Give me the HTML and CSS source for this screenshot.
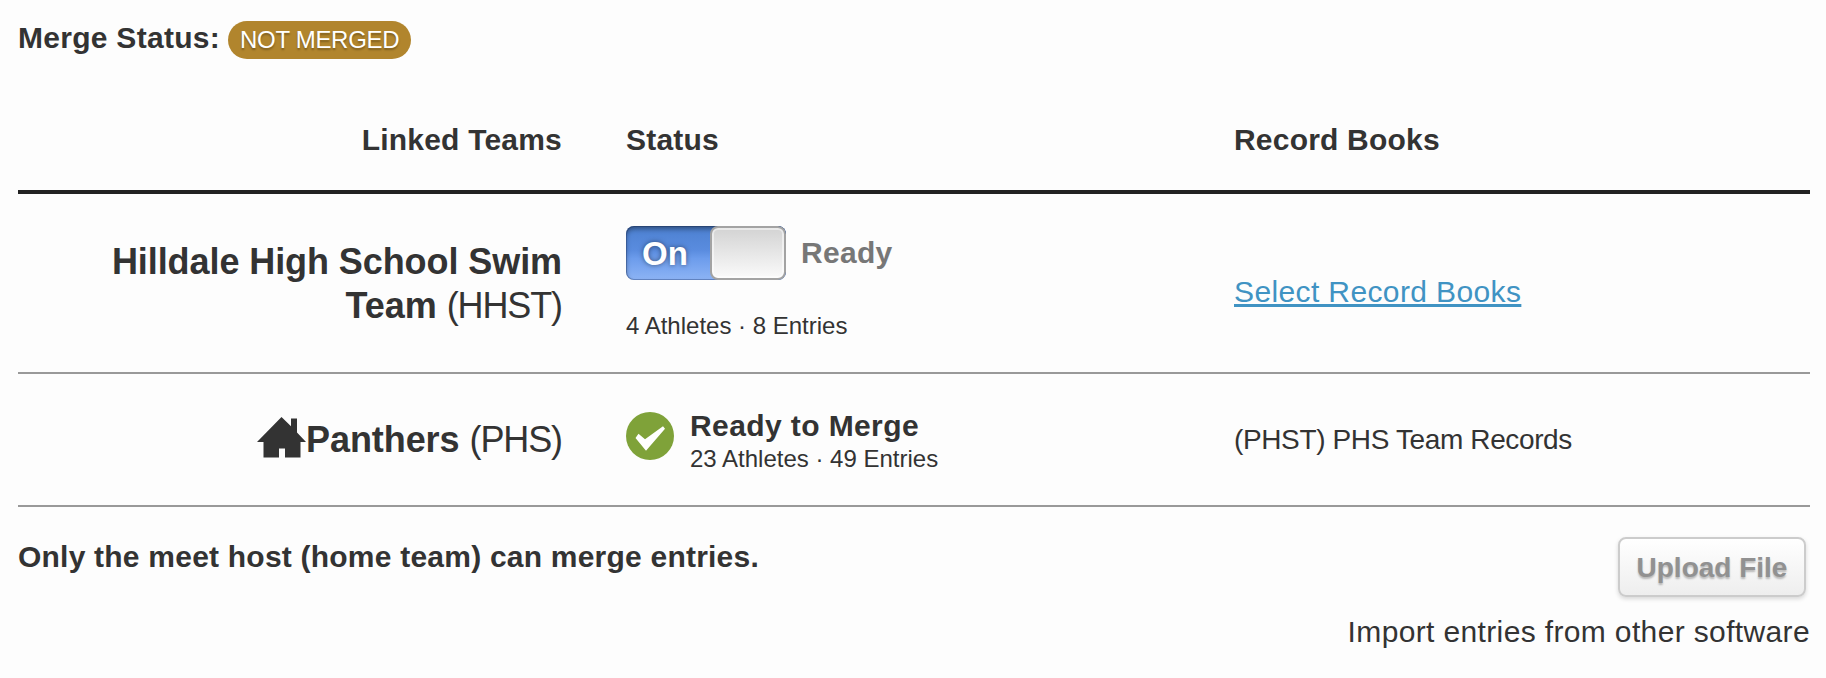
FILE: index.html
```html
<!DOCTYPE html>
<html lang="en">
<head>
    <meta charset="UTF-8">
    <meta name="viewport" content="width=device-width, initial-scale=1.0">
    <title>Merge Entries</title>
    <link rel="stylesheet" href="styles.css">
</head>
<body>
    <div class="merge-status">
        <span class="merge-label">Merge Status:</span>
        <span class="badge">NOT MERGED</span>
    </div>
    <table class="teams">
        <thead>
            <tr>
                <th class="team">Linked Teams</th>
                <th>Status</th>
                <th>Record Books</th>
            </tr>
        </thead>
        <tbody>
            <tr class="away">
                <td class="team">
                    <strong>Hilldale High School Swim</strong><br>
                    <strong>Team</strong> <span class="abbr">(HHST)</span>
                </td>
                <td>
                    <div class="switch-row">
                        <div class="switch">
                            <span class="switch-on">On</span>
                            <span class="switch-handle"></span>
                        </div>
                        <span class="switch-label">Ready</span>
                    </div>
                    <div class="counts">4 Athletes · 8 Entries</div>
                </td>
                <td class="records-link"><a href="#">Select Record Books</a></td>
            </tr>
            <tr class="home">
                <td class="team">
                    <div class="home-name">
                        <svg class="house" width="49" height="41" viewBox="0 0 49 41">
                            <path d="M24.500 0L34 9.300V1.500h6v14L49 25h-5.500v15.500H28V31.500h-6v9H6.500V25H0z" fill="#333"/>
                        </svg>
                        <span><strong>Panthers</strong> <span class="abbr">(PHS)</span></span>
                    </div>
                </td>
                <td>
                    <div class="ready">
                        <svg class="check" width="48" height="48" viewBox="0 0 48 48">
                            <circle cx="24" cy="24" r="24" fill="#7fa239"/>
                            <path d="M9.500 26l3-4.300 6.500 5.600L37 14.300l2 2.400L20 38.700z" fill="#fff"/>
                        </svg>
                        <div>
                            <div class="ready-title">Ready to Merge</div>
                            <div class="counts">23 Athletes · 49 Entries</div>
                        </div>
                    </div>
                </td>
                <td class="records">(PHST) PHS Team Records</td>
            </tr>
        </tbody>
    </table>
    <div class="footer">
        <strong class="note">Only the meet host (home team) can merge entries.</strong>
        <div class="upload">
            <button class="upload-btn" disabled>Upload File</button>
            <div class="upload-hint">Import entries from other software</div>
        </div>
    </div>
</body>
</html>
```
FILE: styles.css
```css
* {
    box-sizing: border-box;
}

body {
    margin: 0;
    padding: 18px 16px 0 18px;
    background-color: #fdfdfd;
    color: #333;
    font-family: "Liberation Sans", Helvetica, Arial, sans-serif;
    font-size: 30px;
    line-height: 40px;
}

.merge-status {
    display: flex;
    align-items: center;
    gap: 8px;
    height: 40px;
}

.merge-label {
    font-weight: bold;
    letter-spacing: 0.28px;
}

.badge {
    height: 38px;
    margin-top: 4px;
    padding: 0 12px;
    border-radius: 19px;
    background-color: #b1852d;
    color: #fff;
    font-size: 24px;
    line-height: 37px;
    letter-spacing: -0.3px;
    text-shadow: 0 2px 2px rgba(0, 0, 0, 0.3);
}

.teams {
    width: 100%;
    margin-top: 30px;
    border-collapse: separate;
    border-spacing: 0;
    table-layout: fixed;
}

th {
    padding: 32px 32px 30px;
    border-bottom: 4px solid #222;
    letter-spacing: 0.2px;
    text-align: left;
}

td {
    padding: 0 32px;
    border-bottom: 2px solid #999;
    vertical-align: middle;
}

th:first-child {
    width: 576px;
}

.team {
    text-align: right;
}

td.team {
    font-size: 36px;
    line-height: 44px;
}

td.team strong {
    letter-spacing: -0.08px;
}

.abbr {
    letter-spacing: -1.1px;
}

.away td {
    height: 180px;
}

.away .team {
    padding-top: 2px;
}

.home td {
    height: 133px;
}

.switch-row {
    display: flex;
    align-items: center;
    gap: 15px;
}

.switch {
    display: flex;
    width: 160px;
    height: 54px;
    border-radius: 8px;
    overflow: hidden;
    background: linear-gradient(#4c80d0, #5a8cdf 45%, #6c9cec 60%, #8db4f5);
    box-shadow: inset 0 3px 5px rgba(0, 0, 0, 0.4), inset 0 0 0 1px rgba(40, 70, 130, 0.4);
}

.switch-on {
    width: 84px;
    padding-left: 16px;
    color: #fff;
    font-size: 33px;
    font-weight: bold;
    line-height: 56px;
    text-shadow: 0 0 5px rgba(0, 0, 0, 0.5);
}

.switch-handle {
    flex: 1;
    border: 2px solid #a3a3a3;
    border-radius: 8px;
    background: linear-gradient(#d3d3d3, #fafafa);
    box-shadow: inset 0 0 0 2px rgba(255, 255, 255, 0.5);
}

.switch-label {
    padding-top: 1px;
    color: #777;
    font-weight: bold;
    letter-spacing: 0.3px;
}

.counts {
    font-size: 24px;
    line-height: 30px;
}

.switch-row + .counts {
    margin-top: 31px;
}

a {
    color: #4093c3;
    letter-spacing: 0.38px;
    text-decoration-thickness: 3px;
    text-underline-offset: 2px;
}

.records-link {
    padding-top: 18px;
}

.home-name {
    display: flex;
    justify-content: flex-end;
    align-items: center;
}

.house {
    margin-top: -5px;
}

.ready {
    display: flex;
    align-items: flex-start;
    gap: 16px;
    padding-top: 2px;
}

.check {
    margin-top: 4px;
}

.ready-title {
    font-weight: bold;
    line-height: 36px;
    letter-spacing: 0.4px;
}

.records {
    font-size: 28px;
    letter-spacing: -0.37px;
}

.footer {
    display: flex;
    justify-content: space-between;
    align-items: flex-start;
    padding-top: 30px;
}

.note {
    letter-spacing: 0.22px;
}

.upload {
    display: flex;
    flex-direction: column;
    align-items: flex-end;
}

.upload-btn {
    width: 188px;
    height: 60px;
    margin-right: 4px;
    padding: 2px 0 0;
    border: 2px solid #ccc;
    border-radius: 8px;
    background: linear-gradient(#fff, #eee);
    box-shadow: 0 2px 4px rgba(0, 0, 0, 0.15);
    color: #919191;
    font-family: inherit;
    font-size: 28px;
    font-weight: bold;
    text-shadow: 0 2px 2px rgba(0, 0, 0, 0.25);
}

.upload-hint {
    margin-top: 15px;
    letter-spacing: 0.36px;
}
```
